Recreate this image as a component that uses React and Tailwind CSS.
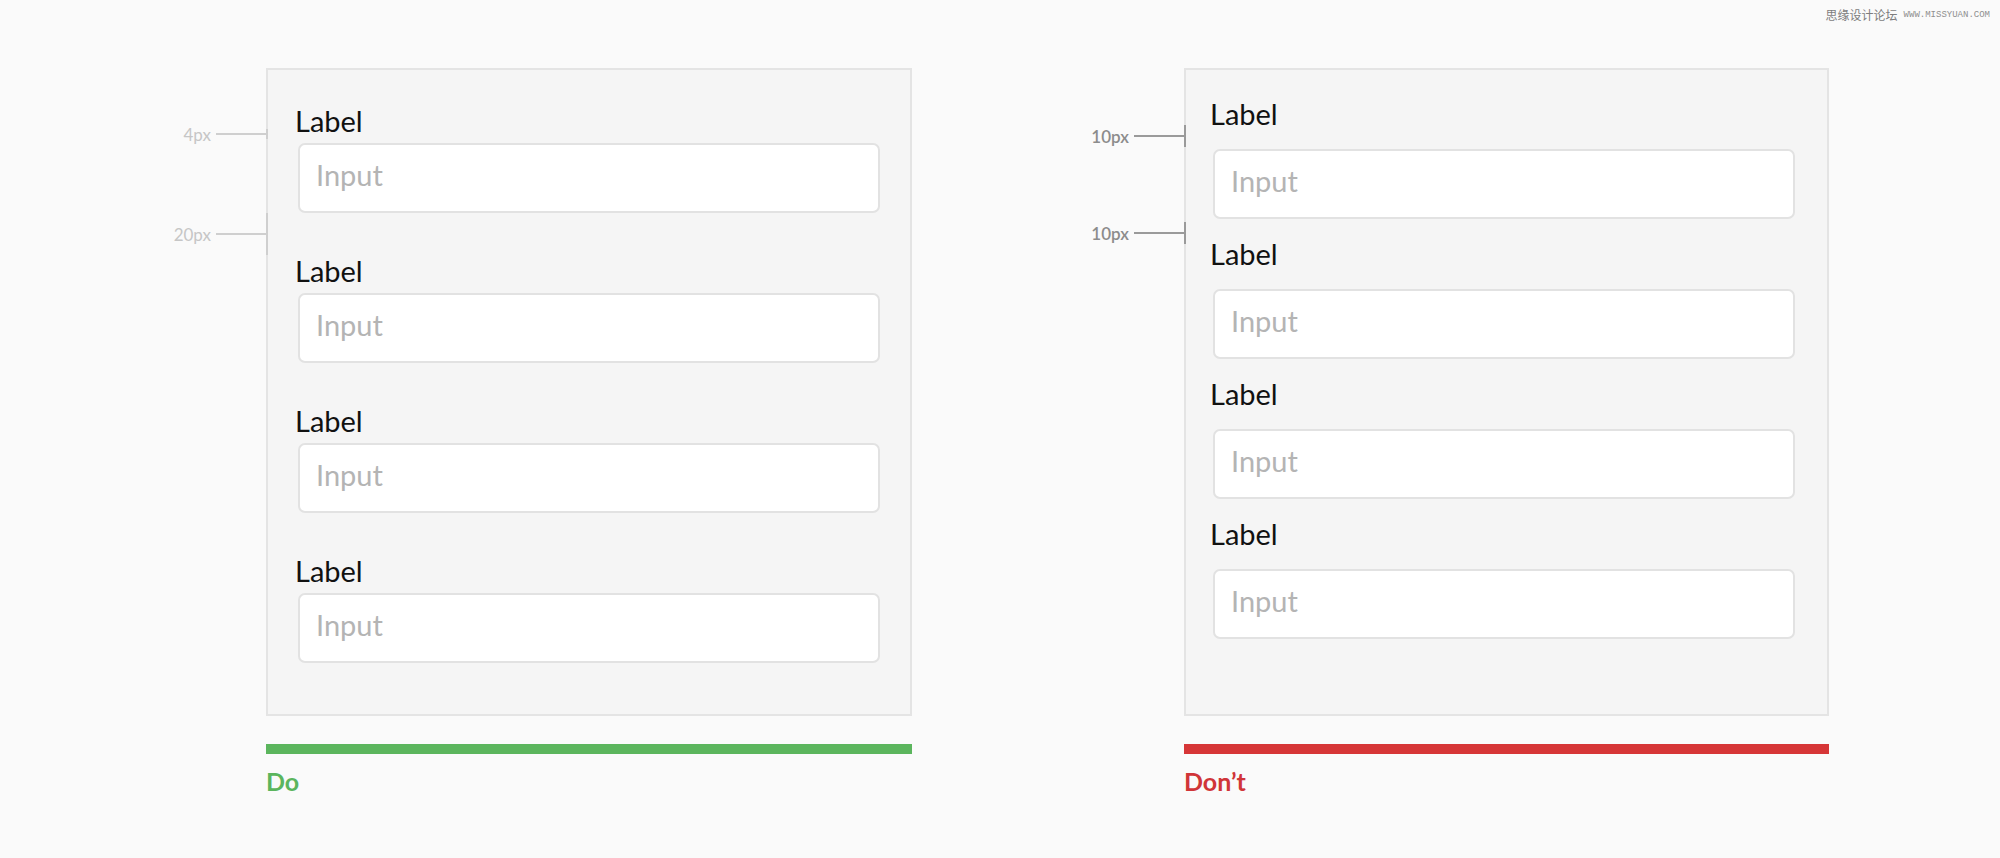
const font = { fontFamily: "Lato, 'Noto Sans', sans-serif" };

const Field = ({ gapClass }) => (
  <div className="flex flex-col">
    <span className="text-[29px] leading-[35px] text-[#111111]">Label</span>
    <div
      className={`${gapClass} ml-[3px] w-[582px] h-[70px] shrink-0 bg-white border-2 border-[#e2e2e2] rounded-[7px] pl-[16px] pt-[12px]`}
    >
      <span className="block text-[29px] leading-[35px] text-[#b4b4b4]">Input</span>
    </div>
  </div>
);

// spacing callout drawn to the left of a panel
const Callout = ({ text, top, height, dark }) => (
  <div
    className="absolute left-[-101px] flex items-center"
    style={{ top, height }}
  >
    <span
      className={`w-[44px] text-right text-[17px] leading-none ${
        dark ? "text-[#8c8c8c] font-semibold" : "text-[#c6c6c6]"
      }`}
    >
      {text}
    </span>
    <span className={`ml-[5px] w-[50px] h-[2px] ${dark ? "bg-[#9a9a9a]" : "bg-[#cfcfcf]"}`} />
    <span className={`w-[2px] h-full ${dark ? "bg-[#9a9a9a]" : "bg-[#cfcfcf]"}`} />
  </div>
);

const App = () => {
  return (
    <div className="relative w-full h-screen bg-[#fafafa] overflow-hidden" style={font}>
      {/* Watermark */}
      <div className="absolute top-[7px] right-[10px] flex items-center gap-[6px]">
        <span
          className="text-[12px] leading-[16px] text-[#7d7d7d]"
          style={{ fontFamily: "'Noto Sans CJK SC', sans-serif" }}
        >
          思缘设计论坛
        </span>
        <span
          className="text-[9px] leading-[16px] text-[#8f8f8f]"
          style={{ fontFamily: "'Liberation Mono', monospace" }}
        >
          WWW.MISSYUAN.COM
        </span>
      </div>

      <div className="flex pt-[68px] pl-[266px] gap-[272px]">
        {/* Do column */}
        <div className="w-[646px] flex flex-col">
          <div className="relative h-[648px] bg-[#f5f5f5] border-2 border-[#e4e4e4] pt-[33px] pl-[27px] flex flex-col gap-[40px]">
            <Callout text="4px" top={59} height={10} />
            <Callout text="20px" top={143} height={42} />
            <Field gapClass="mt-[5px]" />
            <Field gapClass="mt-[5px]" />
            <Field gapClass="mt-[5px]" />
            <Field gapClass="mt-[5px]" />
          </div>
          <div className="mt-[28px] h-[10px] bg-[#5bb55d]" />
          <span className="mt-[12px] text-[25px] leading-[30px] font-bold text-[#5bb55d]">Do</span>
        </div>

        {/* Don't column */}
        <div className="w-[645px] flex flex-col">
          <div className="relative h-[648px] bg-[#f5f5f5] border-2 border-[#e4e4e4] pt-[26px] pl-[24px] flex flex-col gap-[17px]">
            <Callout text="10px" top={55} height={22} dark />
            <Callout text="10px" top={152} height={22} dark />
            <Field gapClass="mt-[18px]" />
            <Field gapClass="mt-[18px]" />
            <Field gapClass="mt-[18px]" />
            <Field gapClass="mt-[18px]" />
          </div>
          <div className="mt-[28px] h-[10px] bg-[#d63637]" />
          <span className="mt-[12px] text-[25px] leading-[30px] font-bold text-[#d03538]">Don’t</span>
        </div>
      </div>
    </div>
  );
};

export default App;
